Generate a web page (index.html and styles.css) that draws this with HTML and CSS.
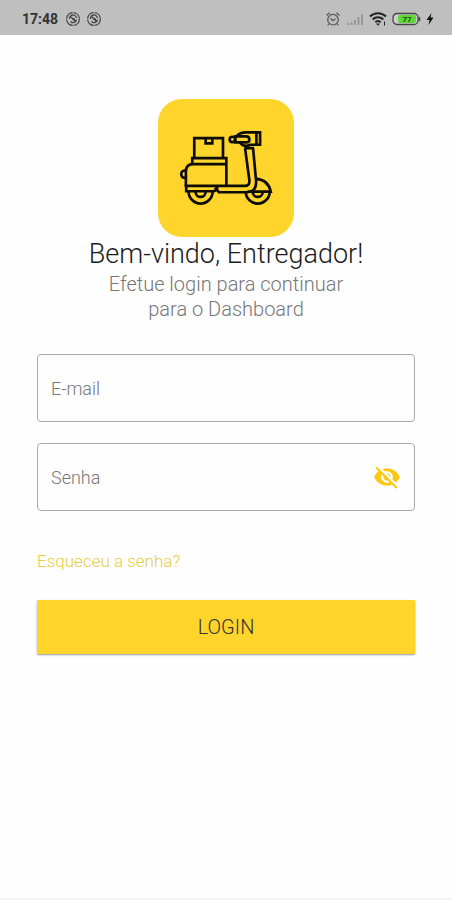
FILE: index.html
```html
<!DOCTYPE html>
<html lang="pt-BR">
<head>
    <meta charset="UTF-8">
    <meta name="viewport" content="width=device-width, initial-scale=1.0">
    <title>Login</title>
    <link rel="stylesheet" href="styles.css">
</head>
<body>

    <header class="status-bar">
        <div class="status-group">
            <span class="clock">17:48</span>
            <svg viewBox="0 0 16 16" width="16" height="16" fill="none" stroke="#444">
                <circle cx="8" cy="8" r="6.4" stroke-width="1.3" stroke-dasharray="9 1"/>
                <path d="M4.5 8a3.5 3.5 0 0 1 7-1M11.5 8.5a3.5 3.5 0 0 1-6 2M5 5l6 6M7 8h3" stroke-width="1.3"/>
            </svg>
            <svg viewBox="0 0 16 16" width="16" height="16" fill="none" stroke="#444">
                <circle cx="8" cy="8" r="6.4" stroke-width="1.3" stroke-dasharray="9 1"/>
                <path d="M4.5 8a3.5 3.5 0 0 1 7-1M11.5 8.5a3.5 3.5 0 0 1-6 2M5 5l6 6M7 8h3" stroke-width="1.3"/>
            </svg>
        </div>
        <div class="status-group">
            <!-- Alarm -->
            <svg viewBox="0 0 16 16" width="16" height="16" fill="none" stroke="#555" stroke-width="1.2">
                <circle cx="8" cy="8.7" r="5.3"/>
                <path d="M1.5 4.5l3-2.7M14.5 4.5l-3-2.7M5.5 7.500L8 9.7l2.5-2M3.7 13l-1 1.5M12.3 13l1 1.5"/>
            </svg>
            <!-- Signal -->
            <svg viewBox="0 0 18 16" width="18" height="16" fill="none" stroke="#999" stroke-width="2">
                <path d="M2 14v-2M5.5 14v-3M9 14V9M12.5 14V6M16 14V3"/>
            </svg>
            <!-- Wi-fi -->
            <svg viewBox="0 0 18 16" width="18" height="16" fill="none" stroke="#222" stroke-width="2">
                <path d="M1 5.5a11.5 11.5 0 0 1 16 0M3.7 8.5a7.5 7.5 0 0 1 10.6 0M6.3 11.2a4 4 0 0 1 5.4 0"/>
                <path d="M7 12.5h4l-2 2.3z" fill="#222" stroke="none"/>
                <path d="M15.5 10.5v4" stroke-width="1"/>
            </svg>
            <!-- Battery -->
            <svg viewBox="0 0 29 14" width="29" height="14">
                <rect x="1" y="1.5" width="25" height="11" rx="4" fill="#ccc" stroke="#444" stroke-width="1.3"/>
                <rect x="6" y="3" width="18" height="8" rx="2" fill="#5ed838"/>
                <path d="M27.5 5v4" stroke="#444" stroke-width="1.5"/>
                <text class="battery-text" x="15" y="10" text-anchor="middle">77</text>
            </svg>
            <!-- Charging -->
            <svg viewBox="0 0 8 14" width="8" height="14">
                <path d="M5.5 1L0.5 8h3L2.5 13l5-7.500h-3z" fill="#111"/>
            </svg>
        </div>
    </header>

    <main class="login">
        <svg class="logo" viewBox="26 27 406 413" fill="none" stroke="#0d0d05" stroke-width="8">
            <!-- Boxes -->
            <path d="M134 203V144h86v59M168 144v16h20v-16"/>
            <path d="M128 222v-18h102v82"/>
            <path d="M109 287v-43q0-22 21-22h100"/>
            <path d="M108 241q-13 0-13 11t13 11"/>
            <!-- Body -->
            <path d="M105 287h182q13-1 12-17l-13-96M110 287v16h79q14 0 14-15M196 292l12 14h84q29-2 27-34l-9-98"/>
            <path d="M319 266q36 2 44 38h-70"/>
            <!-- Handlebar -->
            <path d="M261 138q10-11 28-11h42v37h-29q-20 9-31-6"/>
            <path d="M257 139h32q10 0 10 9t-10 9h-32z"/>
            <circle cx="248" cy="148" r="8"/>
            <path d="M320 128v37M284 174h29"/>
            <!-- Wheels -->
            <path d="M117 304a36 36 0 0 0 72 0M138 305a15 15 0 0 0 30 0M288 304a36 36 0 0 0 72 0M309 305a15 15 0 0 0 30 0"/>
        </svg>

        <h1>Bem-vindo, Entregador!</h1>
        <p class="subtitle">Efetue login para continuar para o Dashboard</p>

        <form class="login-form">
            <div class="field">
                <label for="email">E-mail</label>
                <input type="email" id="email" name="email">
            </div>
            <div class="field">
                <label for="senha">Senha</label>
                <input type="password" id="senha" name="senha">
                <button type="button" class="toggle" aria-label="Mostrar senha">
                    <svg viewBox="0 0 24 24" width="28" height="28" fill="#fbc812">
                        <path d="M12 7c2.76 0 5 2.24 5 5 0 .65-.13 1.26-.36 1.83l2.92 2.92c1.51-1.26 2.7-2.89 3.43-4.75-1.73-4.39-6-7.5-11-7.5-1.4 0-2.74.25-3.98.7l2.16 2.16C10.74 7.13 11.35 7 12 7zM2 4.27l2.28 2.28.46.46C3.08 8.3 1.78 10.02 1 12c1.73 4.39 6 7.5 11 7.5 1.55 0 3.03-.3 4.38-.84l.42.42L19.73 22 21 20.73 3.27 3 2 4.27zM7.53 9.8l1.55 1.55c-.05.21-.08.43-.08.65 0 1.66 1.34 3 3 3 .22 0 .44-.03.65-.08l1.55 1.55c-.67.33-1.41.53-2.2.53-2.76 0-5-2.24-5-5 0-.79.2-1.53.53-2.2zm4.31-.78l3.15 3.15.02-.16c0-1.66-1.34-3-3-3l-.17.01z"/>
                    </svg>
                </button>
            </div>
            <a class="forgot" href="#">Esqueceu a senha?</a>
            <button type="submit" class="submit">LOGIN</button>
        </form>
    </main>

</body>
</html>
```

FILE: styles.css
```css
/* General Styles */
* {
    margin: 0;
    padding: 0;
    box-sizing: border-box;
}

body {
    font-family: Roboto, 'Liberation Sans', sans-serif;
    font-weight: 300;
    background-color: #fefefe;
    color: #1c1c1c;
    display: flex;
    flex-direction: column;
    min-height: 100vh;
    border-bottom: 2px solid #f6f6f6;
}

/* Status Bar */
.status-bar {
    display: flex;
    justify-content: space-between;
    align-items: center;
    background-color: #bfbfbf;
    padding: 2px 18px 0 22px;
    height: 35px;
}

.status-group {
    display: flex;
    align-items: center;
    gap: 5px;
}

.clock {
    margin-right: 2px;
    font-size: 14px;
    font-weight: 700;
    color: #333;
}

.battery-text {
    font-size: 8px;
    font-weight: 700;
    fill: #264d1a;
}

/* Login */
.login {
    display: flex;
    flex-direction: column;
    align-items: center;
    padding: 64px 37px 40px;
}

.logo {
    width: 136px;
    height: 138px;
    background-color: #ffd52b;
    border-radius: 24px;
}

h1 {
    font-size: 27px;
    font-weight: 300;
    line-height: 35px;
    text-align: center;
}

.subtitle {
    max-width: 260px;
    font-size: 20px;
    line-height: 25px;
    color: #777;
    text-align: center;
}

.login-form {
    display: flex;
    flex-direction: column;
    align-self: stretch;
    margin-top: 32px;
}

/* Input Fields */
.field {
    display: flex;
    align-items: center;
    height: 68px;
    margin-bottom: 21px;
    padding: 0 13px;
    border: 1px solid #aaa;
    border-radius: 4px;
}

.field label {
    font-size: 18px;
    color: #777;
}

.field input {
    flex: 1;
    min-width: 0;
    height: 100%;
    padding-left: 8px;
    border: none;
    outline: none;
    background: none;
    font: inherit;
    font-size: 18px;
}

.toggle {
    display: flex;
    border: none;
    background: none;
    cursor: pointer;
}

.forgot {
    align-self: flex-start;
    margin-top: 18px;
    font-size: 17px;
    line-height: 22px;
    color: #e6cd45;
    text-decoration: none;
}

/* Submit Button */
.submit {
    height: 54px;
    margin-top: 28px;
    border: none;
    border-radius: 1px;
    background-color: #ffd52b;
    box-shadow: 0 1px 2px rgba(0, 0, 0, 0.4);
    color: #333;
    font: inherit;
    font-size: 20px;
    cursor: pointer;
}
```
